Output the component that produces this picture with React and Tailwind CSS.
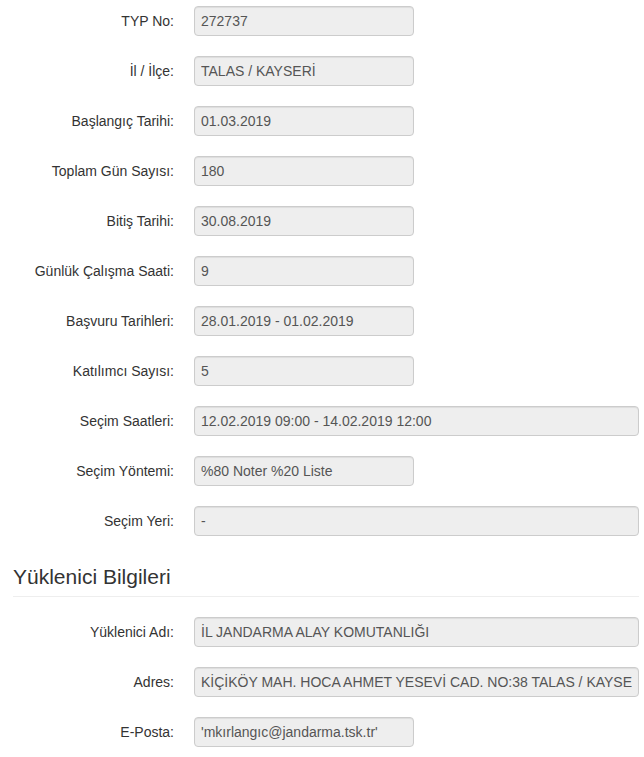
const FIELDS = [
  { label: 'TYP No:', value: '272737' },
  { label: 'İl / İlçe:', value: 'TALAS / KAYSERİ' },
  { label: 'Başlangıç Tarihi:', value: '01.03.2019' },
  { label: 'Toplam Gün Sayısı:', value: '180' },
  { label: 'Bitiş Tarihi:', value: '30.08.2019' },
  { label: 'Günlük Çalışma Saati:', value: '9' },
  { label: 'Başvuru Tarihleri:', value: '28.01.2019 - 01.02.2019' },
  { label: 'Katılımcı Sayısı:', value: '5' },
  { label: 'Seçim Saatleri:', value: '12.02.2019 09:00 - 14.02.2019 12:00', wide: true },
  { label: 'Seçim Yöntemi:', value: '%80 Noter %20 Liste' },
  { label: 'Seçim Yeri:', value: '-', wide: true },
];

const CONTRACTOR = [
  { label: 'Yüklenici Adı:', value: 'İL JANDARMA ALAY KOMUTANLIĞI', wide: true },
  { label: 'Adres:', value: 'KİÇİKÖY MAH. HOCA AHMET YESEVİ CAD. NO:38 TALAS / KAYSERİ', wide: true },
  { label: 'E-Posta:', value: "'mkırlangıc@jandarma.tsk.tr'" },
];

function Row({ label, value, wide }) {
  return (
    <div className="flex items-center h-[30px] mb-[20px]">
      <label className="w-[161px] shrink-0 text-right text-[14px] text-[#333]">{label}</label>
      <input
        readOnly
        value={value}
        className={`ml-[20px] h-[30px] px-[6px] bg-[#eee] border border-[#ccc] rounded-[4px] text-[14px] text-[#555] outline-none shadow-[inset_0_1px_1px_rgba(0,0,0,0.075)] ${wide ? 'w-[445px]' : 'w-[220px]'}`}
      />
    </div>
  );
}

export default function App() {
  return (
    <div className="bg-white min-h-[757px] pt-[6px] pl-[13px] pr-[5px] font-['Liberation_Sans',Arial,sans-serif]">
      {FIELDS.map(f => <Row key={f.label} {...f} />)}

      {/* contractor section */}
      <h3 className="mt-[29px] text-[21px] leading-[23px] text-[#333]">Yüklenici Bilgileri</h3>
      <hr className="mt-[8px] mb-[20px] border-0 border-t border-[#eee]" />

      {CONTRACTOR.map(f => <Row key={f.label} {...f} />)}
    </div>
  );
}
